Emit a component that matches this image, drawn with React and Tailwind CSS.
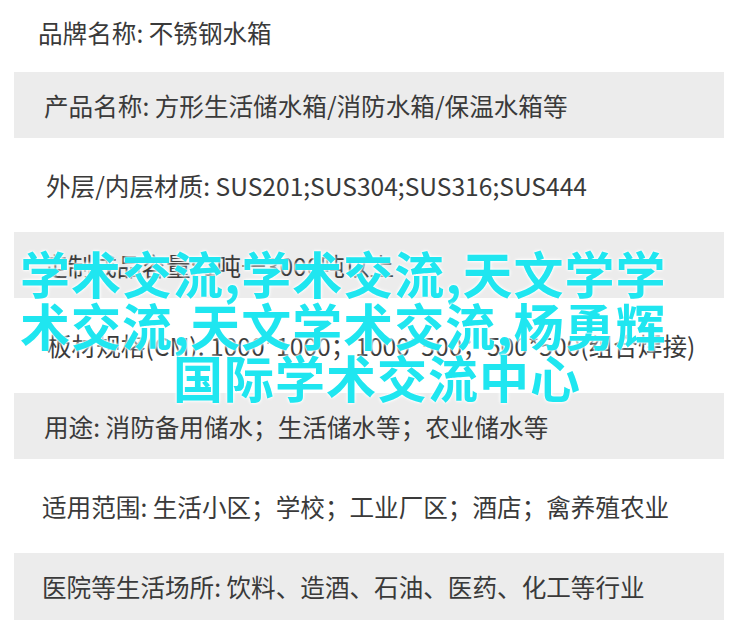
import React from "react";

const rows = [
  { text: "品牌名称: 不锈钢水箱", gray: false, h: "h-[72px]", pl: "pl-[24px]", pb: "pb-[8px]" },
  { text: "产品名称: 方形生活储水箱/消防水箱/保温水箱等", gray: true, h: "h-[66px]", pl: "pl-[30px]", pb: "" },
  { text: "外层/内层材质: SUS201;SUS304;SUS316;SUS444", gray: false, h: "h-[94px]", pl: "pl-[32px]", pb: "" },
  { text: "定制成品容量: 1吨一3000吨以上", gray: true, h: "h-[66px]", pl: "pl-[29px]", pb: "" },
  { text: "板材规格(CM): 1000*1000；1000*500；500*500(组合焊接)", gray: false, h: "h-[95px]", pl: "pl-[33px]", pb: "" },
  { text: "用途: 消防备用储水；生活储水等；农业储水等", gray: true, h: "h-[66px]", pl: "pl-[30px]", pb: "" },
  { text: "适用范围: 生活小区；学校；工业厂区；酒店；禽养殖农业", gray: false, h: "h-[94px]", pl: "pl-[28px]", pb: "" },
  { text: "医院等生活场所: 饮料、造酒、石油、医药、化工等行业", gray: true, h: "h-[67px]", pl: "pl-[28px]", pb: "" },
];

export default function App() {
  return (
    <div className="relative w-[750px] h-[638px] overflow-hidden bg-white [font-family:'Noto_Sans_CJK_SC','Noto_Sans',sans-serif]">
      <div className="flex flex-col pl-[14px] w-[724px]">
        {rows.map((r, i) => (
          <div
            key={i}
            className={`flex items-center ${r.h} ${r.pl} ${r.pb} ${r.gray ? "bg-[#ececec]" : "bg-white"} text-[24.6px] leading-none text-[#3a3a3a] whitespace-nowrap`}
          >
            {r.text}
          </div>
        ))}
      </div>
      <div className="absolute left-0 top-[246px] w-[750px] text-[50px] leading-[52px] font-bold tracking-[1px] text-[#1fe6f0] whitespace-nowrap [text-shadow:0_0_2px_#fff,0_0_3px_#fff,0_0_4px_#fff]">
        <div className="pl-[20px]">学术交流,学术交流,天文学学</div>
        <div className="pl-[20px]">术交流,天文学术交流,杨勇辉</div>
        <div className="pl-[173px]">国际学术交流中心</div>
      </div>
    </div>
  );
}
